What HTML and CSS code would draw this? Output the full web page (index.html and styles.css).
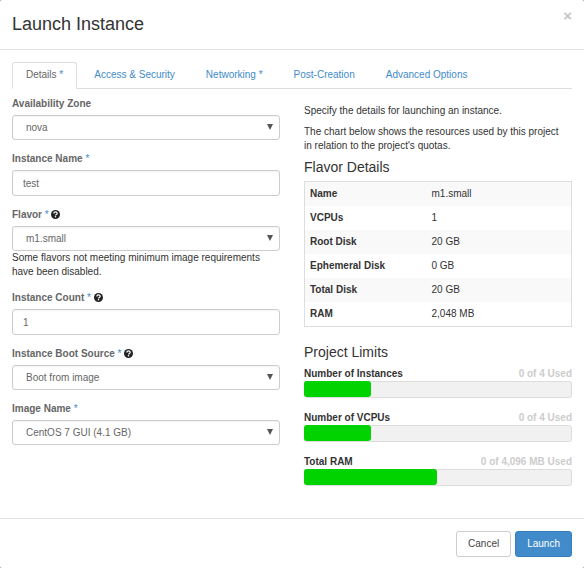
FILE: index.html
```html
<!DOCTYPE html>
<html lang="en">
<head>
<meta charset="utf-8">
<meta name="viewport" content="width=device-width, initial-scale=1">
<title>Launch Instance</title>
<link rel="stylesheet" href="styles.css">
</head>
<body>
<svg class="sprite" aria-hidden="true">
  <symbol id="help" viewBox="0 0 18 18">
    <circle cx="9" cy="9" r="9" fill="currentColor"/>
    <path d="M5.7 7.2C5.7 2.8 12.3 3 12.3 6.9C12.3 9 9 8.8 9 11" fill="none" stroke="#fff" stroke-width="2.5"/>
    <path d="M7.7 12.2h2.6v2.6H7.7z" fill="#fff"/>
  </symbol>
  <symbol id="arrow" viewBox="0 0 6 6">
    <path d="M0 0h6L3 6z" fill="currentColor"/>
  </symbol>
</svg>
<form class="modal">
  <header class="modal-header">
    <h1>Launch Instance</h1>
    <button class="close" type="button" aria-label="Close">×</button>
  </header>
  <main class="modal-body">
    <nav class="tabs">
      <a class="tab active" href="#details">Details <span class="req">*</span></a>
      <a class="tab" href="#access">Access &amp; Security</a>
      <a class="tab" href="#networking">Networking <span class="req">*</span></a>
      <a class="tab" href="#post">Post-Creation</a>
      <a class="tab" href="#advanced">Advanced Options</a>
    </nav>
    <div class="columns" id="details">
      <section class="fields">
        <div class="field">
          <label for="zone">Availability Zone</label>
          <div class="select"><select id="zone"><option>nova</option></select><svg class="arrow"><use href="#arrow"/></svg></div>
        </div>
        <div class="field">
          <label for="name">Instance Name <span class="req">*</span></label>
          <input id="name" type="text" value="test">
        </div>
        <div class="field">
          <label for="flavor">Flavor <span class="req">*</span> <svg class="help"><use href="#help"/></svg></label>
          <div class="select"><select id="flavor"><option>m1.small</option></select><svg class="arrow"><use href="#arrow"/></svg></div>
          <p class="hint">Some flavors not meeting minimum image requirements have been disabled.</p>
        </div>
        <div class="field">
          <label for="count">Instance Count <span class="req">*</span> <svg class="help"><use href="#help"/></svg></label>
          <input id="count" type="text" inputmode="numeric" value="1">
        </div>
        <div class="field">
          <label for="source">Instance Boot Source <span class="req">*</span> <svg class="help"><use href="#help"/></svg></label>
          <div class="select"><select id="source"><option>Boot from image</option></select><svg class="arrow"><use href="#arrow"/></svg></div>
        </div>
        <div class="field">
          <label for="image">Image Name <span class="req">*</span></label>
          <div class="select"><select id="image"><option>CentOS 7 GUI (4.1 GB)</option></select><svg class="arrow"><use href="#arrow"/></svg></div>
        </div>
      </section>
      <section class="info">
        <p>Specify the details for launching an instance.</p>
        <p>The chart below shows the resources used by this project in relation to the project's quotas.</p>
        <h2>Flavor Details</h2>
        <table>
          <tbody>
            <tr><th scope="row">Name</th><td>m1.small</td></tr>
            <tr><th scope="row">VCPUs</th><td>1</td></tr>
            <tr><th scope="row">Root Disk</th><td>20 GB</td></tr>
            <tr><th scope="row">Ephemeral Disk</th><td>0 GB</td></tr>
            <tr><th scope="row">Total Disk</th><td>20 GB</td></tr>
            <tr><th scope="row">RAM</th><td>2,048 MB</td></tr>
          </tbody>
        </table>
        <h2>Project Limits</h2>
        <div class="quota">
          <div class="quota-title"><strong>Number of Instances</strong><span>0 of 4 Used</span></div>
          <div class="bar"><div class="fill" style="width:25%"></div></div>
        </div>
        <div class="quota">
          <div class="quota-title"><strong>Number of VCPUs</strong><span>0 of 4 Used</span></div>
          <div class="bar"><div class="fill" style="width:25%"></div></div>
        </div>
        <div class="quota">
          <div class="quota-title"><strong>Total RAM</strong><span>0 of 4,096 MB Used</span></div>
          <div class="bar"><div class="fill" style="width:50%"></div></div>
        </div>
      </section>
    </div>
  </main>
  <footer class="modal-footer">
    <button class="btn" type="button">Cancel</button>
    <button class="btn primary" type="submit">Launch</button>
  </footer>
</form>
</body>
</html>
```
FILE: styles.css
```css
* { box-sizing: border-box; }
body {
  margin: 0;
  background: #999;
  color: #333;
  font: 10px/14px "Liberation Sans", Arial, sans-serif;
}
h1, h2, p { margin: 0; font-weight: 400; }
button, input, select { font: inherit; color: inherit; }
.sprite { display: none; }
.modal {
  display: flex;
  flex-direction: column;
  min-height: 100vh;
  background: #fff;
  border-radius: 2px;
}
.modal-header {
  display: flex;
  justify-content: space-between;
  align-items: flex-start;
  padding: 12px;
  border-bottom: 1px solid #e5e5e5;
}
h1 { font-size: 18px; line-height: 25px; }
.close {
  padding: 0;
  border: 0;
  background: none;
  color: #c4c4c4;
  font-size: 15px;
  font-weight: 700;
  line-height: 8px;
}
.modal-body { flex: 1; padding: 12px; }
.tabs { display: flex; gap: 3px; border-bottom: 1px solid #ddd; }
.tab {
  margin-bottom: -1px;
  padding: 5px 13px 6px;
  border: 1px solid transparent;
  border-radius: 3px 3px 0 0;
  color: #428bca;
  text-decoration: none;
}
.tab.active { border-color: #ddd #ddd #fff; background: #fff; color: #666; }
.req { color: #428bca; font-weight: 400; }
.columns { display: grid; grid-template-columns: 1fr 1fr; gap: 24px; padding-top: 8px; }
.fields { display: flex; flex-direction: column; gap: 12px; }
label { display: block; margin-bottom: 4px; color: #666; font-weight: 700; }
.help { width: 9px; height: 9px; color: #222; vertical-align: -1px; }
.select { position: relative; }
input, select {
  display: block;
  width: 100%;
  height: 26px;
  padding: 0 10px;
  border: 1px solid #ccc;
  border-radius: 3px;
  background: #fff;
  box-shadow: inset 0 1px 1px #f4f4f4;
  color: #666;
}
select { height: 25px; padding: 0 13px; appearance: none; }
.arrow { position: absolute; top: 9px; right: 7px; width: 6px; height: 6px; color: #555; pointer-events: none; }
.info { padding-top: 7px; }
.info p { margin-bottom: 7px; padding-right: 8px; }
h2 { font-size: 14px; line-height: 15px; }
.info p + h2 { margin-bottom: 6px; }
table { width: 100%; border-collapse: collapse; border: 1px solid #ddd; margin-bottom: 18px; table-layout: fixed; }
th, td { height: 24px; padding: 5px; text-align: left; }
th { width: 122px; }
tr:nth-child(odd) { background: #f9f9f9; }
.quota { margin-top: 7px; margin-bottom: 13px; }
.quota-title { display: flex; justify-content: space-between; }
.quota-title span { color: #ccc; font-weight: 700; }
.bar { height: 17px; border: 1px solid #ddd; border-radius: 3px; background: #f1f1f1; }
.fill { height: 16px; margin: -1px; border-radius: 3px; background: #00d300; }
.modal-footer {
  display: flex;
  justify-content: flex-end;
  gap: 4px;
  padding: 12px 12px 11px;
  border-top: 1px solid #e5e5e5;
}
.btn { height: 26px; padding: 0 11px; border: 1px solid #ccc; border-radius: 3px; background: #fff; color: #444; }
.btn.primary { border-color: #357ebd; background: #428bca; color: #fff; }
```
